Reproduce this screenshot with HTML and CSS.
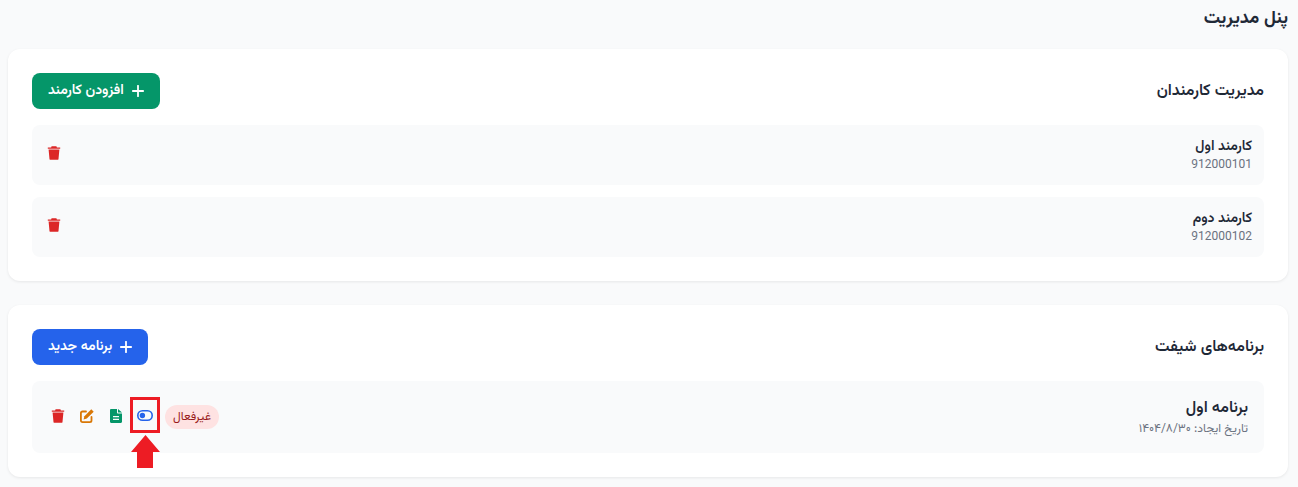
FILE: index.html
```html
<!DOCTYPE html>
<html lang="fa" dir="rtl">
<head>
    <meta charset="UTF-8">
    <meta name="viewport" content="width=device-width, initial-scale=1.0">
    <title>پنل مدیریت</title>
    <link rel="stylesheet" href="styles.css">
</head>
<body>
    <h1 class="page-title">پنل مدیریت</h1>

    <section class="card">
        <div class="card-head">
            <h2>مدیریت کارمندان</h2>
            <button class="btn green">
                <svg class="plus" viewBox="0 0 12 12"><path d="M6 .8v10.400M.8 6h10.400"/></svg>
                افزودن کارمند
            </button>
        </div>
        <div class="list">
            <div class="row">
                <div>
                    <div class="name">کارمند اول</div>
                    <div class="phone">912000101</div>
                </div>
                <button class="icon-btn red">
                    <svg viewBox="0 0 14 14"><path d="M.8 1.500h12.400v1.300H.8zM4.600.3h4.800l.5 1.200H4.100zM1.600 3.400h10.800l-.9 9.500a1 1 0 0 1-1 .9h-7a1 1 0 0 1-1-.9z"/></svg>
                </button>
            </div>
            <div class="row">
                <div>
                    <div class="name">کارمند دوم</div>
                    <div class="phone">912000102</div>
                </div>
                <button class="icon-btn red">
                    <svg viewBox="0 0 14 14"><path d="M.8 1.500h12.400v1.300H.8zM4.600.3h4.800l.5 1.200H4.100zM1.600 3.400h10.800l-.9 9.500a1 1 0 0 1-1 .9h-7a1 1 0 0 1-1-.9z"/></svg>
                </button>
            </div>
        </div>
    </section>

    <section class="card">
        <div class="card-head">
            <h2>برنامه‌های شیفت</h2>
            <button class="btn blue">
                <svg class="plus" viewBox="0 0 12 12"><path d="M6 .8v10.400M.8 6h10.400"/></svg>
                برنامه جدید
            </button>
        </div>
        <div class="row shift">
            <div>
                <div class="shift-name">برنامه اول</div>
                <div class="shift-date">تاریخ ایجاد: ۱۴۰۴/۸/۳۰</div>
            </div>
            <div class="actions">
                <span class="badge">غیرفعال</span>
                <button class="icon-btn blue-icon toggle">
                    <svg viewBox="0 0 16 11"><rect x=".8" y=".8" width="14.400" height="9.400" rx="4.700" fill="none" stroke="currentColor" stroke-width="1.600"/><circle cx="5.400" cy="5.500" r="2.700"/></svg>
                </button>
                <button class="icon-btn green-icon">
                    <svg viewBox="0 0 12 14"><path fill-rule="evenodd" d="M1.200 0H7v3.600c0 .6.5 1 1 1h4v8.200c0 .7-.5 1.200-1.200 1.200H1.200C.5 14 0 13.500 0 12.800V1.200C0 .5.500 0 1.200 0zM3 7v1.300h6V7zm0 2.700V11h6V9.700zM8 0l4 3.600H8z"/></svg>
                </button>
                <button class="icon-btn amber">
                    <svg viewBox="0 0 14 14"><path d="M11.500 8v3.500c0 1-.6 1.600-1.600 1.600H2.500c-1 0-1.600-.6-1.600-1.600V4.100c0-1 .6-1.600 1.600-1.600H6" fill="none" stroke="currentColor" stroke-width="1.800" stroke-linecap="round"/><path d="M11.300.3l2.400 2.400-6.900 6.900-3.200.8.800-3.200z"/></svg>
                </button>
                <button class="icon-btn red">
                    <svg viewBox="0 0 14 14"><path d="M.8 1.500h12.400v1.300H.8zM4.600.3h4.800l.5 1.200H4.100zM1.600 3.400h10.800l-.9 9.500a1 1 0 0 1-1 .9h-7a1 1 0 0 1-1-.9z"/></svg>
                </button>
                <!-- annotation over the toggle -->
                <span class="mark"></span>
                <svg class="mark-arrow" viewBox="0 0 29 33"><path d="M14.500 0L29 17H22V33H6V17H0z"/></svg>
            </div>
        </div>
    </section>
</body>
</html>
```

FILE: styles.css
```css
* {
    box-sizing: border-box;
    padding: 0;
    margin: 0;
}

html {
    font-family: "Vazirmatn", "Noto Sans Arabic", "Noto Naskh Arabic", Roboto, sans-serif;
}

body {
    background: #f9fafb;
    color: #1f2937;
    padding: 8px 10px 10px 8px;
}

.page-title {
    font-size: 18px;
    font-weight: 700;
    line-height: 22px;
    height: 41px;
    color: #1f2937;
}

.card {
    background: #fff;
    border-radius: 12px;
    box-shadow: 0 1px 3px rgba(0, 0, 0, 0.08);
    padding: 24px;
    margin-bottom: 24px;
}

.card:last-child {
    margin-bottom: 0;
}

.card-head {
    display: flex;
    justify-content: space-between;
    align-items: center;
    height: 36px;
    margin-bottom: 16px;
}

.card-head h2 {
    font-size: 16px;
    font-weight: 600;
    color: #1f2937;
}

.btn {
    display: flex;
    align-items: center;
    gap: 8px;
    height: 36px;
    padding: 0 16px;
    border: 0;
    border-radius: 8px;
    color: #fff;
    font-family: inherit;
    font-size: 14px;
    font-weight: 600;
}

.btn.green {
    background: #059669;
}

.btn.blue {
    background: #2563eb;
}

.plus {
    width: 12px;
    height: 12px;
    fill: none;
    stroke: #fff;
    stroke-width: 1.8;
    stroke-linecap: round;
}

.list {
    display: flex;
    flex-direction: column;
    gap: 12px;
}

.row {
    display: flex;
    justify-content: space-between;
    align-items: center;
    height: 60px;
    padding: 0 12px;
    background: #f9fafb;
    border-radius: 8px;
}

.row > .icon-btn {
    width: 20px;
    margin-bottom: 4px;
}

.name {
    font-size: 14px;
    font-weight: 600;
    line-height: 20px;
    color: #1f2937;
}

.phone {
    font-size: 12px;
    line-height: 16px;
    color: #6b7280;
}

.icon-btn {
    display: flex;
    align-items: center;
    justify-content: center;
    width: 21px;
    height: 21px;
    border: 0;
    background: none;
}

.icon-btn svg {
    width: 14px;
    height: 14px;
    fill: currentColor;
}

.icon-btn.toggle svg {
    width: 16px;
    height: 11px;
}

.red {
    color: #dc2626;
}

.amber {
    color: #d97706;
}

.green-icon {
    color: #059669;
}

.blue-icon {
    color: #2563eb;
}

.shift {
    height: 72px;
    padding: 0 16px;
}

.shift-name {
    font-size: 16px;
    font-weight: 600;
    line-height: 24px;
    color: #1f2937;
}

.shift-date {
    font-size: 12px;
    line-height: 16px;
    color: #6b7280;
}

.actions {
    position: relative;
    display: flex;
    align-items: center;
    gap: 8px;
}

.actions .icon-btn {
    align-self: flex-start;
}

.actions .icon-btn svg {
    margin-right: 1px;
}

.badge {
    height: 24px;
    line-height: 24px;
    padding: 0 8px;
    margin-left: 1px;
    border-radius: 12px;
    background: #fee2e2;
    color: #991b1b;
    font-size: 12px;
}

.mark {
    position: absolute;
    left: 82px;
    top: -8px;
    width: 30px;
    height: 36px;
    border: 3px solid #ed1c24;
}

.mark-arrow {
    position: absolute;
    left: 83px;
    top: 30px;
    width: 29px;
    height: 33px;
    fill: #ed1c24;
}
```
